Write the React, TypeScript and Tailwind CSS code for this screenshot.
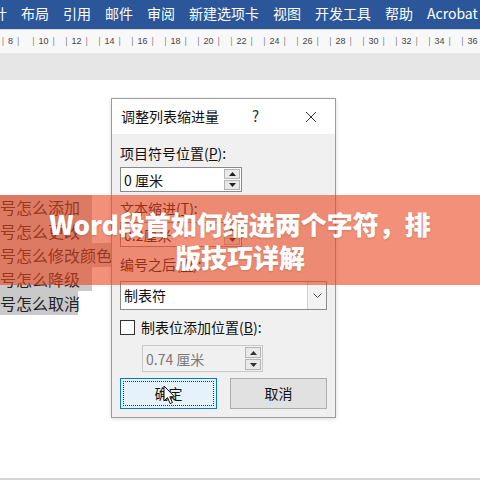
const tabs = ["设计", "布局", "引用", "邮件", "审阅", "新建选项卡", "视图", "开发工具", "帮助", "Acrobat"];
const marks = [8, 10, 12, 14, 16, 18, 20, 22, 24, 26, 28, 30, 32, 34, 36];

const docLines = [
  { text: "号怎么添加", w: "w-[92px]" },
  { text: "号怎么更改", w: "w-[92px]" },
  { text: "号怎么修改颜色", w: "w-[111px]" },
  { text: "号怎么降级", w: "w-[92px]" },
  { text: "号怎么取消", w: "w-[78px]" },
];

function Tri({ up, disabled }: { up: boolean; disabled?: boolean }) {
  return (
    <svg width="7" height="4" viewBox="0 0 7 4" className="block">
      <polygon
        points={up ? "0,4 7,4 3.5,0" : "0,0 7,0 3.5,4"}
        fill={disabled ? "#333" : "#222"}
      />
    </svg>
  );
}

function Spinner({ disabled }: { disabled?: boolean }) {
  return (
    <div className="flex h-full w-[17px] flex-col gap-[1px] py-[1px] pr-[1px]">
      <div className="flex flex-1 items-center justify-center border border-[#b4b4b4] bg-[#e9e9e9]">
        <Tri up disabled={disabled} />
      </div>
      <div className="flex flex-1 items-center justify-center border border-[#b4b4b4] bg-[#e9e9e9]">
        <Tri up={false} disabled={disabled} />
      </div>
    </div>
  );
}

function NumberBox({ value, disabled, className }: { value: string; disabled?: boolean; className: string }) {
  return (
    <div
      className={`flex items-stretch border ${
        disabled ? "border-[#c8c8c8] bg-[#f0f0f0] text-[#7a7a7a]" : "border-[#8a8a8a] bg-white text-[#111]"
      } ${className}`}
    >
      <div className="flex flex-1 items-center pl-[3px] text-[14px] leading-none">{value}</div>
      <Spinner disabled={disabled} />
    </div>
  );
}

function Cursor() {
  return (
    <svg width="13" height="20" viewBox="0 0 13 20" className="absolute left-[163px] top-[385px]">
      <path
        d="M1 1 L1 16 L4.5 12.6 L7.2 18.6 L9.4 17.6 L6.8 11.8 L11.6 11.8 Z"
        fill="white"
        stroke="#111"
        strokeWidth="1"
        strokeLinejoin="round"
      />
    </svg>
  );
}

export default function App() {
  return (
    <div
      className="relative flex h-[480px] w-[480px] flex-col overflow-hidden bg-white"
      style={{ fontFamily: '"Noto Sans CJK SC", "Noto Sans", sans-serif' }}
    >
      {/* ribbon tabs */}
      <div className="flex h-[29px] shrink-0 items-center gap-[14px] bg-[#2b579a] pb-[3px] text-[14px] text-white">
        {tabs.map((t, i) => (
          <span key={t} className={`whitespace-nowrap leading-none ${i === 0 ? "-ml-[21px]" : ""}`}>
            {t}
          </span>
        ))}
      </div>
      <div className="h-[1px] shrink-0 bg-[#dcdcdc]" />

      {/* ruler */}
      <div
        className="flex h-[23px] shrink-0 items-center bg-[#f8f8f8] text-[9px] text-[#444]"
        style={{ fontFamily: '"Liberation Sans", sans-serif' }}
      >
        {marks.map((m, i) => (
          <div key={m} className={`flex w-[33px] shrink-0 justify-center gap-[4px] ${i === 0 ? "-ml-[6px]" : ""}`}>
            <span className="text-[#888]">|</span>
            <span>{m}</span>
            <span className="text-[#888]">|</span>
          </div>
        ))}
      </div>

      {/* gray strip above page */}
      <div className="h-[27px] shrink-0 bg-[#e6e6e6]" />

      {/* document */}
      <div className="relative flex-1">
        <div className="flex flex-col pt-[115px] text-[16px] text-[#222]">
          {docLines.map((l) => (
            <div key={l.text} className={`h-[24px] ${l.w} whitespace-nowrap bg-[#c9c9c9] leading-[24px]`}>
              {l.text}
            </div>
          ))}
        </div>

        {/* dialog */}
        <div className="absolute left-[111px] top-[18px] flex h-[320px] w-[225px] flex-col border border-[#9c9c9c] bg-[#f0f0f0] shadow-[0_1px_4px_rgba(0,0,0,0.15)]">
          <div className="flex h-[35px] shrink-0 items-center bg-white pl-[9px] text-[14px] text-[#111]">
            <span className="w-[131px]">调整列表缩进量</span>
            <span className="text-[15px] text-[#333]">?</span>
            <svg width="12" height="12" viewBox="0 0 12 12" className="ml-[46px]">
              <path d="M1 1 L11 11 M11 1 L1 11" stroke="#333" strokeWidth="1" />
            </svg>
          </div>

          <div className="flex flex-1 flex-col px-[8px] pt-[9px] text-[14px] text-[#111]">
            <div className="h-[20px] leading-[20px]">
              项目符号位置(<span className="underline">P</span>):
            </div>
            <NumberBox value="0 厘米" className="mt-[4px] h-[25px] w-[122px]" />

            <div className="mt-[6px] h-[20px] leading-[20px]">
              文本缩进(<span className="underline">T</span>):
            </div>
            <NumberBox value="0.2厘米" className="mt-[4px] h-[25px] w-[122px]" />

            <div className="mt-[7px] h-[20px] leading-[20px]">
              编号之后(<span className="underline">W</span>):
            </div>
            <div className="mt-[7px] flex h-[29px] items-stretch border border-[#8a8a8a] bg-white">
              <div className="flex flex-1 items-center pl-[3px]">制表符</div>
              <div className="flex w-[19px] items-center justify-center border-l border-[#d0d0d0] bg-[#f3f3f3]">
                <svg width="9" height="5" viewBox="0 0 9 5">
                  <polyline points="0.5,0.5 4.5,4.5 8.5,0.5" fill="none" stroke="#444" strokeWidth="1" />
                </svg>
              </div>
            </div>

            <div className="mt-[9px] flex h-[16px] items-center gap-[6px]">
              <div className="h-[15px] w-[15px] border border-[#333] bg-white" />
              <span className="leading-none">
                制表位添加位置(<span className="underline">B</span>):
              </span>
            </div>

            <NumberBox value="0.74 厘米" disabled className="ml-[22px] mt-[10px] h-[27px] w-[121px]" />

            <div className="mt-[6px] flex gap-[13px]">
              <div className="flex h-[31px] w-[97px] items-center justify-center border border-[#0078d7] bg-[#e5f1fb] p-[2px]">
                <div className="flex h-full w-full items-center justify-center border border-dotted border-[#333]">
                  确定
                </div>
              </div>
              <div className="flex h-[31px] w-[97px] items-center justify-center border border-[#adadad] bg-[#e1e1e1]">
                取消
              </div>
            </div>
          </div>
        </div>
      </div>
      <div className="h-[2px] shrink-0 bg-[#d4d4d4]" />

      <Cursor />

      {/* title banner */}
      <div className="absolute left-0 top-[195px] flex h-[90px] w-full flex-col items-center justify-center bg-[#e9461f]/60 text-[26px] font-black leading-[33px] text-white [text-shadow:0_1px_2px_rgba(0,0,0,0.15)]">
        <div className="whitespace-nowrap">Word段首如何缩进两个字符，排</div>
        <div className="whitespace-nowrap">版技巧详解</div>
      </div>
    </div>
  );
}
